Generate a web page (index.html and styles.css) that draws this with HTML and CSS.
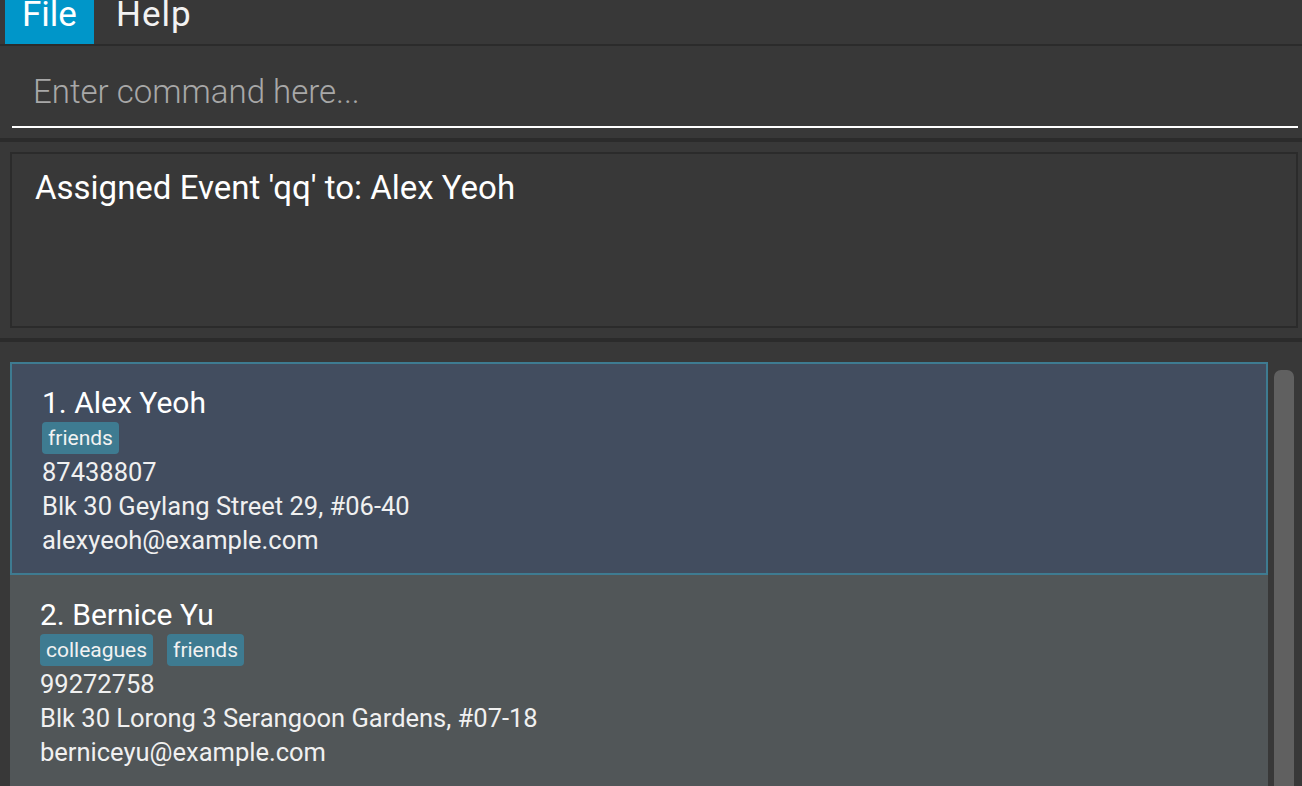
FILE: index.html
```html
<!DOCTYPE html>
<html lang="en">
<head>
<meta charset="utf-8">
<title>Address App</title>
<link rel="stylesheet" href="styles.css">
</head>
<body>
<div class="app">
  <nav class="menubar">
    <div class="menu menu-active">File</div>
    <div class="menu menu-help">Help</div>
  </nav>
  <section class="command-pane">
    <input class="command-input" type="text" placeholder="Enter command here...">
  </section>
  <section class="result-pane">
    <div class="result-box">Assigned Event 'qq' to: Alex Yeoh</div>
  </section>
  <section class="list-pane">
    <div class="list">
      <div class="card card-selected">
        <div class="card-name">1. Alex Yeoh</div>
        <div class="tags"><span class="tag">friends</span></div>
        <div class="card-line">87438807</div>
        <div class="card-line">Blk 30 Geylang Street 29, #06-40</div>
        <div class="card-line">alexyeoh@example.com</div>
      </div>
      <div class="card card-odd">
        <div class="card-name">2. Bernice Yu</div>
        <div class="tags"><span class="tag">colleagues</span><span class="tag">friends</span></div>
        <div class="card-line">99272758</div>
        <div class="card-line">Blk 30 Lorong 3 Serangoon Gardens, #07-18</div>
        <div class="card-line">berniceyu@example.com</div>
      </div>
    </div>
    <div class="scroll-track"><div class="scroll-thumb"></div></div>
  </section>
</div>
</body>
</html>
```
FILE: styles.css
```css
* { box-sizing: border-box; }
html, body {
  margin: 0;
  padding: 0;
  height: 100%;
  overflow: hidden;
  background: #383838;
  font-family: Roboto, "Liberation Sans", sans-serif;
  color: #ffffff;
}
.app {
  display: flex;
  flex-direction: column;
  height: 786px;
}
.menubar {
  display: flex;
  align-items: flex-start;
  height: 46px;
  padding-left: 5px;
  background: #383838;
  border-bottom: 2px solid #2b2b2b;
}
.menu {
  height: 44px;
  padding: 0 17px;
  font-size: 35px;
  line-height: 30px;
  color: #f2f2f2;
}
.menu-help {
  margin-left: 5px;
  letter-spacing: 1px;
}
.menu-active {
  background: #0096c9;
  color: #ffffff;
}
.command-pane {
  height: 96px;
  padding: 10px 4px 10px 12px;
  border-bottom: 4px solid #2b2b2b;
  background: #383838;
}
.command-input {
  display: block;
  width: 100%;
  height: 72px;
  margin: 0;
  padding: 0 0 0 21px;
  border: none;
  border-bottom: 2px solid #ffffff;
  outline: none;
  background: #383838;
  color: #ffffff;
  font-family: Roboto, "Liberation Sans", sans-serif;
  font-size: 33px;
  font-weight: 300;
}
.command-input::placeholder {
  color: #a8a8a8;
  opacity: 1;
}
.result-pane {
  height: 200px;
  padding: 10px 4px 10px 10px;
  border-bottom: 4px solid #2b2b2b;
  background: #383838;
}
.result-box {
  height: 176px;
  border: 2px solid #2b2b2b;
  padding: 15px 20px 0 23px;
  font-size: 33px;
  line-height: 38px;
  color: #ffffff;
}
.list-pane {
  flex: 1;
  display: flex;
  padding: 20px 8px 0 10px;
  min-height: 0;
  overflow: hidden;
}
.list {
  flex: 1;
  display: flex;
  flex-direction: column;
}
.card {
  padding: 22px 30px 20px 30px;
}
.card-selected {
  background: #424d5f;
  border: 2px solid #3e7b91;
  padding: 21px 30px 16px 30px;
}
.card-odd {
  background: #515658;
}
.card-name {
  font-size: 30px;
  line-height: 36px;
  color: #ffffff;
}
.tags {
  display: flex;
  gap: 14px;
  margin-top: 1px;
  margin-bottom: 1px;
}
.tag {
  height: 32px;
  padding: 0 6px;
  border-radius: 4px;
  background: #3e7b91;
  font-size: 21px;
  line-height: 32px;
  color: #f2f2f2;
}
.card-line {
  font-size: 25.5px;
  line-height: 34px;
  color: #f0f0f0;
}
.scroll-track {
  width: 20px;
  margin-left: 6px;
  padding-top: 8px;
}
.scroll-thumb {
  height: 100%;
  border-radius: 7px 7px 0 0;
  background: #606060;
}
```
